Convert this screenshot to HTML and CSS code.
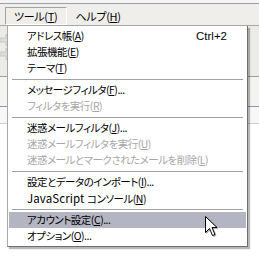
FILE: index.html
```html
<!DOCTYPE html>
<html lang="ja">
<head>
<meta charset="utf-8">
<link rel="stylesheet" href="styles.css">
</head>
<body>
<div class="screen">
  <div class="topline"></div>
  <div class="menubar">
    <div class="mb-item pressed">ツール(<u>T</u>)</div>
    <div class="mb-item">ヘルプ(<u>H</u>)</div>
  </div>
  <div class="toolbar">
    <svg class="ghost" width="10" height="34" viewBox="0 0 10 34">
      <path d="M0 6 L6 6 L6 2 L10 8 L6 14 L6 10 L0 10 Z" fill="#dcdcd8" stroke="#c8c8c4"/>
      <path d="M0 20 L6 20 L6 16 L10 22 L6 28 L6 24 L0 24 Z" fill="#dcdcd8" stroke="#c8c8c4"/>
    </svg>
  </div>
  <div class="band band1"></div>
  <div class="band band2"></div>
  <div class="rest"></div>

  <div class="dropdown">
    <div class="row"><span class="label">アドレス帳(<u>A</u>)</span><span class="key">Ctrl+2</span></div>
    <div class="row"><span class="label">拡張機能(<u>E</u>)</span></div>
    <div class="row"><span class="label">テーマ(<u>T</u>)</span></div>
    <div class="sep"></div>
    <div class="row"><span class="label">メッセージフィルタ(<u>F</u>)...</span></div>
    <div class="row disabled"><span class="label">フィルタを実行(<u>R</u>)</span></div>
    <div class="sep"></div>
    <div class="row"><span class="label">迷惑メールフィルタ(<u>J</u>)...</span></div>
    <div class="row disabled"><span class="label">迷惑メールフィルタを実行(<u>U</u>)</span></div>
    <div class="row disabled"><span class="label">迷惑メールとマークされたメールを削除(<u>L</u>)</span></div>
    <div class="sep"></div>
    <div class="row"><span class="label">設定とデータのインポート(<u>I</u>)...</span></div>
    <div class="row"><span class="label"><span class="lat">JavaScript </span>コンソール(<u>N</u>)</span></div>
    <div class="sep"></div>
    <div class="row active"><span class="label">アカウント設定(<u>C</u>)...</span></div>
    <div class="row"><span class="label">オプション(<u>O</u>)...</span></div>
  </div>

  <svg class="cursor" width="13" height="21" viewBox="0 0 13 21">
    <path d="M0.5 0.5 L0.5 16.5 L4.5 12.5 L7.5 19.5 L10 18.5 L7 11.5 L12 11.5 Z" fill="#ffffff" stroke="#000000" stroke-width="1" stroke-linejoin="miter"/>
  </svg>
</div>
</body>
</html>
```

FILE: styles.css
```css
* { box-sizing: border-box; }
html, body { margin: 0; padding: 0; }
body {
  width: 259px;
  height: 257px;
  overflow: hidden;
  background: #ffffff;
  font-family: "Noto Sans CJK JP", "Liberation Sans", sans-serif;
  font-size: 11px;
  letter-spacing: -0.3px;
  color: #000;
}
u { text-decoration: underline; text-underline-offset: 1px; }
.screen {
  position: relative;
  width: 259px;
  height: 257px;
  display: flex;
  flex-direction: column;
}
.topline {
  height: 4px;
  background: #f4f4f2;
  border-bottom: 1px solid #9d9cb4;
}
.menubar {
  height: 22px;
  background: #efeeea;
  display: flex;
  align-items: flex-start;
  padding: 3px 0 0 5px;
  gap: 0;
  border-bottom: 1px solid #a8a8a8;
}
.mb-item {
  height: 18px;
  line-height: 16px;
  padding: 0 8px;
  white-space: nowrap;
  font-feature-settings: "palt";
  border: 1px solid transparent;
}
.mb-item.pressed {
  border-color: #a3a3a3 #ffffff #ffffff #a3a3a3;
}
.toolbar {
  height: 51px;
  background: #ebebe7;
  border-bottom: 1px solid #9e9e9e;
  padding: 6px 0 0 0;
}
.ghost { display: block; }
.band1 {
  height: 30px;
  background: #f3f3f0;
  border-bottom: 1px solid #7f9db9;
}
.band2 {
  height: 17px;
  background: #f7f7f5;
  border-bottom: 1px solid #c6cfdc;
}
.rest { flex: 1; background: #ffffff; }

.dropdown {
  position: absolute;
  left: 7px;
  top: 26px;
  width: 241px;
  height: 221px;
  background: #ffffff;
  border-left: 1px solid #a8a8a8;
  border-right: 1px solid #6e6e6e;
  border-bottom: 1px solid #6e6e6e;
  padding: 2px 1px 2px 1px;
  box-shadow: 2px 2px 1px rgba(0,0,0,0.28);
  font-feature-settings: "palt";
  font-size: 10.5px;
  letter-spacing: -0.5px;
}
.row {
  height: 16px;
  display: flex;
  align-items: center;
  justify-content: space-between;
  padding: 0 19px 0 18px;
  line-height: 16px;
  white-space: nowrap;
}
.row.disabled { color: #a6a6a6; }
.row.active { background: #b4b5c3; }
.lat { font-size: 11.5px; letter-spacing: 0.1px; }
.key { font-family: "Liberation Sans", sans-serif; font-size: 11.5px; letter-spacing: 0; }
.sep {
  height: 6px;
  display: flex;
  align-items: center;
  padding: 0 3px;
}
.sep::before {
  content: "";
  display: block;
  width: 100%;
  height: 1px;
  background: #a0a0a0;
}
.cursor {
  position: absolute;
  left: 205px;
  top: 216px;
  filter: drop-shadow(1px 1px 0 rgba(0,0,0,0.3));
}
```
